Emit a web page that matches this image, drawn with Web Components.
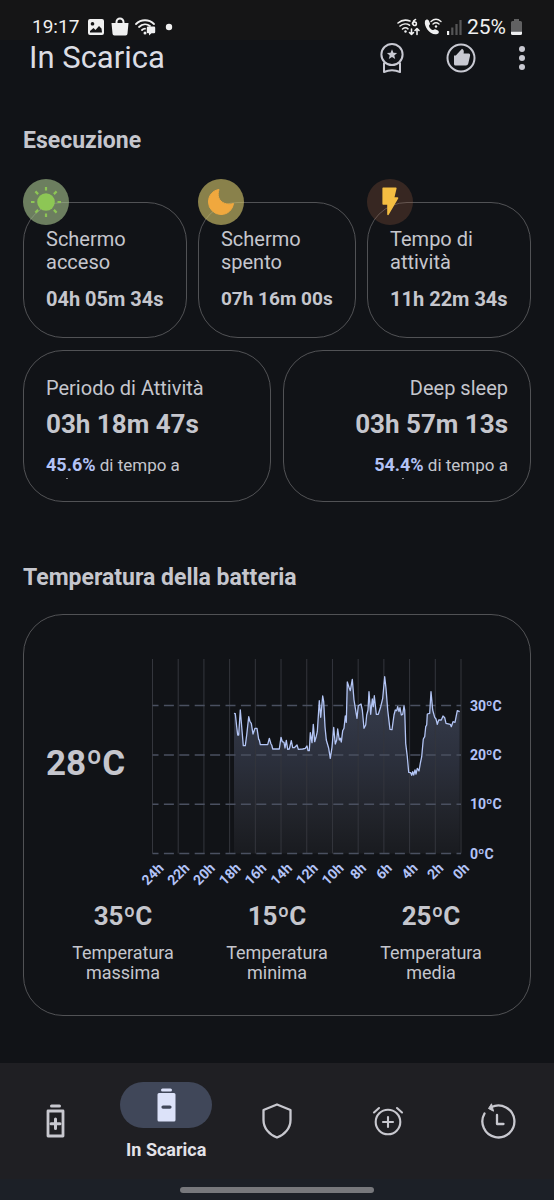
<!DOCTYPE html>
<html lang="it">
<head>
<meta charset="utf-8">
<meta name="viewport" content="width=device-width, initial-scale=1">
<title>In Scarica</title>
<style>
  html { background: #111317; }
  body { margin: 0; font-family: Roboto, "Noto Sans", sans-serif; color: #c5c6cd; }
</style>
</head>
<body>
<battery-app></battery-app>

<script>
const define = (name, html, setup) => customElements.define(name, class extends HTMLElement {
  constructor() {
    super();
    this.attachShadow({ mode: 'open' }).innerHTML = html;
  }
  connectedCallback() { if (setup) setup.call(this, this.shadowRoot); }
});

const ICONS = {
  image: '<path fill="currentColor" fill-rule="evenodd" d="M3 1h12a2 2 0 0 1 2 2v12a2 2 0 0 1-2 2H3a2 2 0 0 1-2-2V3a2 2 0 0 1 2-2zM3 14.500h12l-.5-4-2.500-2.500-3.500 4-2-2L3 13zM5.500 4a1.800 1.800 0 1 0 .01 0z"/>',
  bag: '<path fill="currentColor" d="M.5 5h17l-1 10.500a2 2 0 0 1-2 2h-11a2 2 0 0 1-2-2z"/><path d="M5.500 6V4a3.500 3.500 0 0 1 7 0v2" fill="none" stroke="currentColor" stroke-width="2"/>',
  wifi: '<g fill="none" stroke="currentColor" stroke-width="1.800" stroke-linecap="round"><path d="M1 6c5-5 13-5 18 0M4 9c3.500-3.300 8-3.300 11-1M7 12c1-1 2-1.300 3-1.300"/></g><circle cx="10" cy="15" r="1.500" fill="currentColor"/><path fill="currentColor" d="M13 8.500h6a1.200 1.200 0 0 1 1.200 1.200V14a1.200 1.200 0 0 1-1.200 1.200h-2.500l-2.500 2.300v-2.300h-1A1.200 1.200 0 0 1 11.800 14V9.700A1.200 1.200 0 0 1 13 8.500z"/>',
  dot: '<circle cx="4" cy="4" r="3.200" fill="currentColor"/>',
  wifi6: '<g fill="none" stroke="currentColor" stroke-width="1.600" stroke-linecap="round" stroke-linejoin="round"><path d="M1 5c3.500-3 8-3.500 12-2M3 8c3-2.500 7-2.500 9.500-.8M5.500 11c2-1.600 4-1.600 5.500-.2M18.500 1.500c-3 1-3.500 6-1 6s2.500-3.800 0-3.500-2 1-2 2M14.500 11v5.500m-2-2l2 2 2-2M20 16.500v-6m-2 2l2-2 2 2"/></g><circle cx="8.500" cy="13.500" r="1.200" fill="currentColor"/>',
  call: '<path fill="currentColor" d="M1 3c1-2 3-2 4 0l1 2.500c.3 1-1 1.500-1 2.500.5 2 2 3.500 3.500 4 1 .2 1.700-1.200 2.700-.8L14 12.500c1.500 1 1 3-.8 3.500C7 18-.5 9 1 3z"/><g fill="none" stroke="currentColor" stroke-width="1.400" stroke-linecap="round"><path d="M7 3.500c3-2.600 7-2.600 10 0M9 6c2-1.600 4-1.600 6 0"/></g><circle cx="12" cy="8.500" r="1.200" fill="currentColor"/>',
  signal: '<path fill="currentColor" d="M0 12h2.200v4H0z"/><path fill="currentColor" opacity=".3" d="M4.200 8.500h2.200V16H4.200zM8.400 5h2.200v11H8.400zM12.400 1h2.200v15h-2.200z"/>',
  battery: '<path fill="currentColor" opacity=".35" d="M3 0h5v2h1.500a1.500 1.500 0 0 1 1.500 1.500V12H0V3.500A1.500 1.500 0 0 1 1.500 2H3z"/><path fill="currentColor" d="M0 12.500h11V14.500a1.500 1.500 0 0 1-1.500 1.500h-8A1.500 1.500 0 0 1 0 14.500z"/>',
  award: '<g fill="none" stroke="currentColor" stroke-width="2" stroke-linejoin="round"><circle cx="12" cy="11.500" r="10.600"/><path d="M4 19.500v9.500q8-3.500 16 0v-9.500"/></g><path fill="currentColor" d="M12 6.300l1.400 3.400 3.700.3-2.800 2.400.9 3.600-3.200-2-3.200 2 .9-3.600-2.800-2.400 3.700-.3z"/>',
  thumb: '<circle cx="15" cy="15" r="13.500" fill="none" stroke="currentColor" stroke-width="2"/><path fill="currentColor" d="M8 12.500h1.800L16 5.800q2.500 1 1.600 4.700h5.200q1.500.2 1.300 2l-1.800 8q-.6 2-2.300 2H9.500Q8 22.500 8 21z"/>',
  more: '<g fill="currentColor"><circle cx="4" cy="4" r="3"/><circle cx="4" cy="13" r="3"/><circle cx="4" cy="22" r="3"/></g>',
  sun: '<circle cx="16" cy="16" r="8.800" fill="currentColor"/><path d="M16 1v3.500M16 27.500V31M1 16h3.500M27.500 16H31M5.400 5.400l2.700 2.700M23.900 23.900l2.700 2.700M5.400 26.600l2.700-2.700M23.900 8.100l2.700-2.700" stroke="currentColor" stroke-width="2.200"/>',
  moon: '<path fill="currentColor" stroke="currentColor" stroke-width="1" stroke-linejoin="round" d="M14 3.500C7.500 4.500 3.500 9.500 3.500 16A12.500 12.500 0 0 0 16 28.500c6.500 0 11.500-4.500 12.500-11-6 2-13-.5-14.800-6-.9-2.800-.5-5.500.3-8z"/>',
  bolt: '<path fill="currentColor" stroke="currentColor" stroke-width="1.600" stroke-linejoin="round" d="M9.200 2.300h12.600L19.500 12h4L14 28.300V18H9.200z"/>',
  charge: '<g fill="none" stroke="currentColor" stroke-linejoin="round"><path d="M2 7h15v25H2z" stroke-width="2.800"/><path d="M9.500 15v9.500M5 19.750h9" stroke-width="3" stroke-linecap="round"/></g><path fill="currentColor" d="M5.500.5h8a1.300 1.300 0 0 1 0 3h-8a1.300 1.300 0 0 1 0-3z"/>',
  discharge: '<path fill="currentColor" fill-rule="evenodd" d="M5.500.5h8a1.400 1.400 0 0 1 0 3h-8a1.400 1.400 0 0 1 0-3zM2 5h15a1.500 1.500 0 0 1 1.500 1.500v25.500A1.500 1.500 0 0 1 17 33.500H2A1.500 1.500 0 0 1 .5 32V6.500A1.500 1.500 0 0 1 2 5zM6 17.500a1.600 1.600 0 0 0 0 3.200h7a1.600 1.600 0 0 0 0-3.200z"/>',
  shield: '<path fill="none" stroke="currentColor" stroke-width="2.300" stroke-linejoin="round" d="M15 1.500L28.500 7v10c0 8-5.500 14.500-13.500 17.500C7 31.500 1.500 25 1.500 17V7z"/>',
  alarm: '<g fill="none" stroke="currentColor" stroke-width="2.100" stroke-linecap="round"><circle cx="16" cy="17" r="12.300"/><path d="M16 12v10M11 17h10M2 7.500L7 3M30 7.500L25 3"/></g>',
  history: '<g fill="none" stroke="currentColor" stroke-width="2.300" stroke-linecap="round" stroke-linejoin="round"><path d="M3.500 10.500A16 16 0 1 0 10.500 4M16 12v9h6.500"/></g><path fill="currentColor" stroke="currentColor" stroke-linejoin="round" d="M10.500.8L7.500 5.500l5 2.700z"/>'
};

define('app-icon', `
  <style>
    :host { display: block; flex: none; }
    svg { display: block; overflow: visible; }
  </style>
  <svg aria-hidden="true"></svg>
`, function (root) {
  const [w, h] = this.getAttribute('size').split(' ');
  const svg = root.querySelector('svg');
  svg.setAttribute('viewBox', `0 0 ${w} ${h}`);
  svg.setAttribute('width', w);
  svg.setAttribute('height', h);
  svg.innerHTML = ICONS[this.getAttribute('name')];
});

define('status-bar', `
  <style>
    :host { display: flex; align-items: center; height: 26px; padding: 14px 32px 0; background: #151516; color: #f0f0f0; line-height: 26px; }
    .side { display: flex; align-items: center; gap: 6px; }
    .right { margin-left: auto; gap: 5px; }
    .time { font-size: 19px; padding-right: 2px; }
    .level { font-size: 21px; }
    .dot { margin-left: 4px; }
  </style>
  <div class="side">
    <span class="time">19:17</span>
    <app-icon name="image" size="18 18"></app-icon>
    <app-icon name="bag" size="18 18"></app-icon>
    <app-icon name="wifi" size="20 18"></app-icon>
    <app-icon class="dot" name="dot" size="8 8"></app-icon>
  </div>
  <div class="side right">
    <app-icon name="wifi6" size="22 18"></app-icon>
    <app-icon name="call" size="18 18"></app-icon>
    <app-icon name="signal" size="15 16"></app-icon>
    <span class="level">25%</span>
    <app-icon name="battery" size="11 16"></app-icon>
  </div>
`);

define('top-bar', `
  <style>
    :host { display: flex; align-items: center; height: 36px; padding: 0 28px 0 29px; color: #c8c9d2; }
    h1 { margin: 0 auto 0 0; font-size: 31px; line-height: 36px; font-weight: 400; color: #dcdde4; }
    button { display: block; margin: 0; padding: 0; border: 0; background: none; color: inherit; }
    .actions { display: flex; align-items: center; gap: 42px; }
  </style>
  <h1>In Scarica</h1>
  <div class="actions">
    <button aria-label="Premi"><app-icon name="award" size="24 30"></app-icon></button>
    <button aria-label="Mi piace"><app-icon name="thumb" size="30 30"></app-icon></button>
    <button aria-label="Altro"><app-icon name="more" size="8 26"></app-icon></button>
  </div>
`);

define('app-section', `
  <style>
    :host { display: block; }
    h2 { margin: 0; font-size: 23px; line-height: 28px; font-weight: 700; }
  </style>
  <h2><slot name="title"></slot></h2>
  <slot></slot>
`);

define('outline-card', `
  <style>
    :host { display: block; box-sizing: border-box; position: relative; border: 1px solid #515255; border-radius: 40px; }
  </style>
  <slot></slot>
`);

define('time-card', `
  <style>
    :host { display: block; }
    outline-card { padding: 25px 22px 26px; }
    .badge { position: absolute; left: -1px; top: -24px; width: 46px; height: 46px; border-radius: 50%; display: grid; place-items: center; }
    :host([kind=sun]) .badge { background: #a3be8aa0; color: #8dc655; }
    :host([kind=moon]) .badge { background: #d0c36aa0; color: #f0a83e; }
    :host([kind=bolt]) .badge { background: #a0604444; color: #f4bd42; }
    .label { font-size: 20px; line-height: 23px; }
    .value { margin-top: 13px; font-size: 20px; line-height: 24px; font-weight: 700; white-space: nowrap; }
    :host([compact]) .value { font-size: 19px; }
  </style>
  <outline-card>
    <span class="badge"></span>
    <div class="label"><slot></slot></div>
    <div class="value"><slot name="value"></slot></div>
  </outline-card>
`, function (root) {
  root.querySelector('.badge').innerHTML = `<app-icon name="${this.getAttribute('kind')}" size="32 32"></app-icon>`;
});

define('period-card', `
  <style>
    :host { display: block; }
    :host([align=end]) { text-align: right; }
    outline-card { padding: 25px 22px 22px; }
    .label { font-size: 20px; line-height: 24px; }
    .value { margin-top: 8px; font-size: 26px; line-height: 32px; font-weight: 700; white-space: nowrap; }
    .share { margin-top: 14px; font-size: 17px; line-height: 22px; }
    .share slot { color: #b3c3f7; font-size: 18px; font-weight: 700; }
    .rest { width: 2px; height: 1px; margin: 2px 0 0 20px; background: #8e8f95; }
    :host([align=end]) .rest { margin: 2px 104px 0 auto; }
  </style>
  <outline-card>
    <div class="label"><slot></slot></div>
    <div class="value"><slot name="value"></slot></div>
    <div class="share"><slot name="percent"></slot> di tempo a</div>
    <div class="rest"></div>
  </outline-card>
`);

/* Temperature trace in thirds of a chart unit: x, y pairs from oldest to newest. */
const TRACE = [42,160,46,161,50,200,53,225,56,225,61,150,65,200,70,257,76,257,80,225,86,170,90,185,94,190,99,222,105,205,111,205,116,238,118,240,121,254,143,254,148,235,153,252,155,255,158,267,178,267,183,232,187,245,192,247,195,264,199,241,203,268,208,267,214,242,218,263,223,263,231,255,235,268,248,267,256,265,261,258,264,272,268,272,271,218,276,248,280,193,284,245,288,232,292,215,298,122,302,172,308,108,311,125,315,200,319,240,326,265,331,295,336,262,341,202,346,252,350,240,353,207,358,240,361,235,364,246,368,212,372,205,376,168,379,187,382,66,387,82,391,92,397,58,402,120,408,157,411,175,415,137,423,132,427,150,432,205,437,195,440,165,444,150,447,95,452,163,457,117,460,140,463,107,469,163,475,163,482,140,488,115,494,50,498,85,503,150,510,208,516,209,522,165,526,150,530,152,533,140,537,155,540,143,544,165,548,163,552,138,554,150,557,250,562,290,566,337,572,338,575,346,578,335,581,345,585,330,588,342,592,325,597,333,601,310,605,290,610,237,614,230,617,200,620,195,622,162,629,160,633,95,638,150,644,172,648,177,652,193,656,180,664,180,669,168,674,173,678,190,691,193,694,200,699,185,705,187,712,152,719,155];

define('temperature-chart', `
  <style>
    :host { display: block; }
    svg { display: block; width: 100%; overflow: visible; }
    text { fill: #b3c3f7; font-size: 14px; font-weight: 700; }
    .v { stroke: #34363d; }
    .h { stroke: #4a5060; stroke-width: 1.500; stroke-dasharray: 10 5.400; stroke-dashoffset: 4; }
    .line { fill: none; stroke: #b3c5f5; stroke-width: 1.300; stroke-linejoin: round; }
  </style>
  <svg viewBox="0 0 372 240" role="img" aria-label="Temperatura nelle ultime 24 ore">
    <defs><linearGradient id="fade" gradientUnits="userSpaceOnUse" x1="0" y1="20" x2="0" y2="199">
      <stop offset="0" stop-color="#a0b4e6" stop-opacity=".28"/>
      <stop offset=".5" stop-color="#a0aee0" stop-opacity=".18"/>
      <stop offset="1" stop-color="#b0b0c0" stop-opacity=".05"/>
    </linearGradient></defs>
    <g id="plot"></g>
  </svg>
`, function (root) {
  const left = 16.5, right = 325, top = 4, bottom = 198.5;
  const points = [];
  for (let i = 0; i < TRACE.length; i += 2) points.push(`${(TRACE[i] / 3 + 84).toFixed(1)} ${(TRACE[i + 1] / 3 + 5).toFixed(1)}`);
  const line = 'M' + points.join('L');
  let out = `<path d="${line}V${bottom}H98Z" fill="url(#fade)"/>`;
  for (let hour = 24; hour >= 0; hour -= 2) {
    const x = right - (right - left) * hour / 24;
    const end = x + (hour > 9 ? 12 : 9);
    out += `<line class="v" x1="${x}" x2="${x}" y1="${top}" y2="${bottom}"/>`;
    out += `<text text-anchor="end" transform="translate(${end} 214) rotate(-45)">${hour}h</text>`;
  }
  for (let deg = 0; deg <= 30; deg += 10) {
    const y = bottom - deg * 4.93;
    out += `<line class="h" x1="${left}" x2="${right}" y1="${y}" y2="${y}"/>`;
    out += `<text x="334" y="${y + 5}">${deg}ºC</text>`;
  }
  root.querySelector('#plot').innerHTML = out + `<path class="line" d="${line}"/>`;
});

define('temperature-stat', `
  <style>
    :host { display: block; text-align: center; }
    .value { font-size: 26px; line-height: 32px; font-weight: 700; }
    .label { max-width: 120px; margin: 11px auto 0; font-size: 18px; line-height: 20px; }
  </style>
  <div class="value"><slot name="value"></slot></div>
  <div class="label"><slot></slot></div>
`);

define('temperature-card', `
  <style>
    :host { display: block; }
    outline-card { padding: 40px 22px 32px; }
    .now { display: grid; grid-template-columns: 90px 1fr; align-items: center; }
    .current { padding-bottom: 22px; font-size: 35px; line-height: 40px; font-weight: 700; }
    .stats { display: grid; grid-template-columns: repeat(3, 1fr); margin-top: 5px; }
  </style>
  <outline-card>
    <div class="now">
      <div class="current">28ºC</div>
      <temperature-chart></temperature-chart>
    </div>
    <div class="stats">
      <temperature-stat><span slot="value">35ºC</span>Temperatura massima</temperature-stat>
      <temperature-stat><span slot="value">15ºC</span>Temperatura minima</temperature-stat>
      <temperature-stat><span slot="value">25ºC</span>Temperatura media</temperature-stat>
    </div>
  </outline-card>
`);

define('nav-item', `
  <style>
    :host { display: block; }
    a { display: flex; flex-direction: column; align-items: center; justify-content: center; height: 100%; color: #c8c8cf; text-decoration: none; }
    .icon { display: grid; place-items: center; width: 92px; height: 46px; border-radius: 23px; }
    .text { display: none; font-size: 18px; line-height: 22px; font-weight: 700; color: #e3e2e8; white-space: nowrap; }
    :host([active]) .icon { background: #404759; color: #dce2f9; }
    :host([active]) .text { display: block; margin-top: 11px; }
  </style>
  <a href="#"><span class="icon"></span><span class="text"><slot></slot></span></a>
`, function (root) {
  root.querySelector('a').setAttribute('aria-label', this.getAttribute('label'));
  root.querySelector('.icon').innerHTML = `<app-icon name="${this.getAttribute('icon')}" size="${this.getAttribute('size')}"></app-icon>`;
});

define('bottom-nav', `
  <style>
    :host { display: block; background: #1f1f23; }
    nav { display: grid; grid-template-columns: repeat(5, 1fr); height: 116px; }
    .gesture { display: grid; place-items: center; height: 21px; background: #1c2027; }
    .gesture span { width: 35%; height: 6px; border-radius: 3px; background: #77787c; }
  </style>
  <nav>
    <nav-item icon="charge" size="19 34" label="In Carica"></nav-item>
    <nav-item icon="discharge" size="19 34" label="In Scarica" active>In Scarica</nav-item>
    <nav-item icon="shield" size="30 36" label="Salute"></nav-item>
    <nav-item icon="alarm" size="32 32" label="Allarmi"></nav-item>
    <nav-item icon="history" size="36 36" label="Cronologia"></nav-item>
  </nav>
  <div class="gesture"><span></span></div>
`);

define('battery-app', `
  <style>
    :host { display: flex; flex-direction: column; min-height: 100vh; background: #111317; }
    main { flex: 1; padding: 51px 23px 44px; }
    .times { display: grid; grid-template-columns: repeat(3, auto); gap: 11px; margin-top: 47px; }
    .periods { display: grid; grid-template-columns: 1fr 1fr; gap: 12px; margin-top: 12px; }
    app-section + app-section { margin-top: 62px; }
    temperature-card { margin-top: 22px; }
  </style>
  <status-bar></status-bar>
  <top-bar></top-bar>
  <main>
    <app-section>
      <span slot="title">Esecuzione</span>
      <div class="times">
        <time-card kind="sun">Schermo<br>acceso<span slot="value">04h 05m 34s</span></time-card>
        <time-card kind="moon" compact>Schermo<br>spento<span slot="value">07h 16m 00s</span></time-card>
        <time-card kind="bolt">Tempo di<br>attività<span slot="value">11h 22m 34s</span></time-card>
      </div>
      <div class="periods">
        <period-card>Periodo di Attività<span slot="value">03h 18m 47s</span><span slot="percent">45.6%</span></period-card>
        <period-card align="end">Deep sleep<span slot="value">03h 57m 13s</span><span slot="percent">54.4%</span></period-card>
      </div>
    </app-section>
    <app-section>
      <span slot="title">Temperatura della batteria</span>
      <temperature-card></temperature-card>
    </app-section>
  </main>
  <bottom-nav></bottom-nav>
`);
</script>
</body>
</html>
